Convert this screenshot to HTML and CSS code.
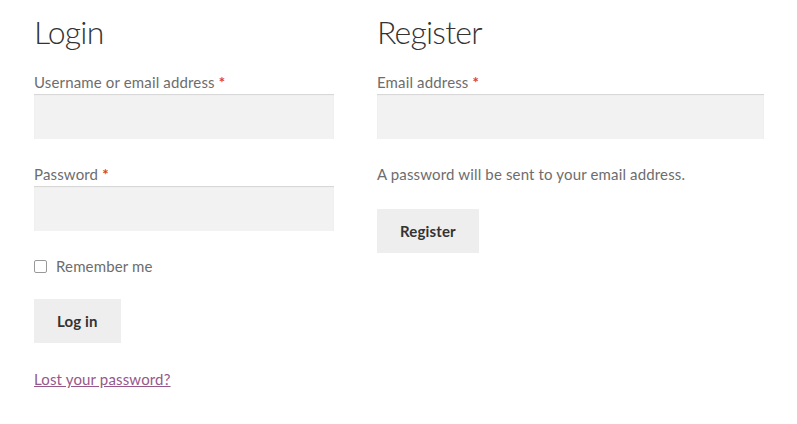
FILE: index.html
```html
<!DOCTYPE html>
<html>
<head>
<meta charset="utf-8">
<link rel="stylesheet" href="styles.css">
</head>
<body>
<div class="container">
  <div class="col col-1">
    <h2 class="title">Login</h2>
    <form class="form">
      <div class="row">
        <label class="label">Username or email address <span class="req">*</span></label>
        <div class="input"></div>
      </div>
      <div class="row">
        <label class="label">Password <span class="req">*</span></label>
        <div class="input"></div>
      </div>
      <div class="check-row">
        <span class="checkbox"></span>
        <span class="check-text">Remember me</span>
      </div>
      <div class="btn-row">
        <button type="button" class="button">Log in</button>
      </div>
      <p class="lost"><a href="#" class="link">Lost your password?</a></p>
    </form>
  </div>
  <div class="col col-2">
    <h2 class="title">Register</h2>
    <form class="form">
      <div class="row">
        <label class="label">Email address <span class="req">*</span></label>
        <div class="input"></div>
      </div>
      <p class="note">A password will be sent to your email address.</p>
      <div class="btn-row reg">
        <button type="button" class="button">Register</button>
      </div>
    </form>
  </div>
</div>
</body>
</html>
```
FILE: styles.css
```css
html, body {
  margin: 0;
  padding: 0;
  background: #ffffff;
}
body {
  font-family: Lato, "Open Sans", sans-serif;
  font-size: 15px;
  line-height: 24px;
  color: #6d6d6d;
  letter-spacing: 0.15px;
}
.container {
  display: flex;
  justify-content: space-between;
  width: 730px;
  margin-left: 34px;
}
.col-1 { width: 300px; }
.col-2 { width: 387px; }
.title {
  margin: 0;
  padding-top: 12px;
  font-size: 32px;
  line-height: 40px;
  font-weight: 300;
  color: #333333;
  letter-spacing: -0.8px;
}
.form { margin: 0; padding-top: 18px; }
.row { margin-bottom: 23px; }
.label {
  display: block;
  line-height: 24px;
}
.req { color: #e2401c; font-weight: 700; }
.input {
  height: 45px;
  background: #f2f2f2;
  box-shadow: inset 0 1px 1px rgba(0,0,0,0.125);
}
.check-row {
  display: flex;
  align-items: center;
  gap: 9px;
  height: 24px;
  margin-top: 1px;
}
.checkbox {
  width: 11px;
  height: 11px;
  border: 1px solid #999;
  border-radius: 2px;
  background: #fff;
}
.btn-row { margin-top: 21px; }
.button {
  display: block;
  border: 0;
  margin: 0;
  background: #eeeeee;
  color: #333333;
  font-family: inherit;
  font-size: 15px;
  font-weight: 700;
  letter-spacing: 0.15px;
  line-height: 24px;
  padding: 10px 23px;
}
.lost { margin: 0; padding-top: 24px; }
.link { color: #96588a; text-decoration: underline; }
.note { margin: 0; padding-bottom: 23px; }
.btn-row.reg { margin-top: 0; }
```
